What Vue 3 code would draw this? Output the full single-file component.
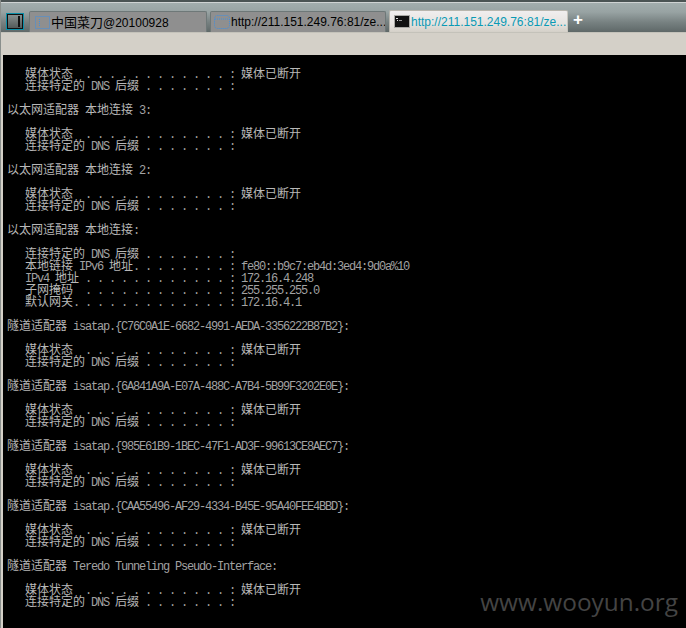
<script setup>
const dhcp = [
  '   媒体状态  . . . . . . . . . . . . : 媒体已断开',
  '   连接特定的 DNS 后缀 . . . . . . . :',
  ''
]
const raw = [
  '',
  ...dhcp,
  '以太网适配器 本地连接 3:',
  '',
  ...dhcp,
  '以太网适配器 本地连接 2:',
  '',
  ...dhcp,
  '以太网适配器 本地连接:',
  '',
  '   连接特定的 DNS 后缀 . . . . . . . :',
  '   本地链接 IPv6 地址. . . . . . . . : fe80::b9c7:eb4d:3ed4:9d0a%10',
  '   IPv4 地址 . . . . . . . . . . . . : 172.16.4.248',
  '   子网掩码  . . . . . . . . . . . . : 255.255.255.0',
  '   默认网关. . . . . . . . . . . . . : 172.16.4.1',
  '',
  '隧道适配器 isatap.{C76C0A1E-6682-4991-AEDA-3356222B87B2}:',
  '',
  ...dhcp,
  '隧道适配器 isatap.{6A841A9A-E07A-488C-A7B4-5B99F3202E0E}:',
  '',
  ...dhcp,
  '隧道适配器 isatap.{985E61B9-1BEC-47F1-AD3F-99613CE8AEC7}:',
  '',
  ...dhcp,
  '隧道适配器 isatap.{CAA55496-AF29-4334-B45E-95A40FEE4BBD}:',
  '',
  ...dhcp,
  '隧道适配器 Teredo Tunneling Pseudo-Interface:',
  '',
  ...dhcp
]
const lines = raw.map((text) =>
  (text.match(/[\u4e00-\u9fff]+|[^\u4e00-\u9fff]+/g) || []).map((t) => ({
    t,
    cjk: /[\u4e00-\u9fff]/.test(t)
  }))
)
</script>

<template>
  <div class="app">
    <header class="tabbar">
      <div class="logo"><i></i></div>
      <div class="tab first">
        <svg class="ico" width="15" height="13" viewBox="0 0 15 13">
          <rect x=".5" y=".5" width="14" height="12" fill="none" stroke="#3f8fe0" stroke-dasharray="1 1" />
          <path d="M4.5 3v8" stroke="#3f8fe0" stroke-dasharray="1 1" />
        </svg>
        <span><b class="zh">中国菜刀</b>@20100928</span>
      </div>
      <div class="tab second">
        <svg class="ico" width="16" height="14" viewBox="0 0 16 14">
          <rect x=".5" y=".5" width="15" height="13" rx="3" fill="none" stroke="#3f8fe0" stroke-dasharray="1 1" />
          <path d="M1 4h14" stroke="#3f8fe0" stroke-dasharray="1 1" />
        </svg>
        <span>http://211.151.249.76:81/ze...</span>
      </div>
      <div class="tab active">
        <svg class="ico" width="16" height="13" viewBox="0 0 16 13">
          <rect x=".5" y=".5" width="15" height="12" fill="#111" stroke="#a9a9a5" />
          <path d="M2 3.5h2M3 5.5h1" stroke="#ddd" />
          <path d="M5 5.5h3" stroke="#999" />
        </svg>
        <span>http://211.151.249.76:81/ze...</span>
      </div>
      <div class="plus">+</div>
    </header>
    <div class="toolbar"></div>
    <main class="console">
      <div v-for="(line, i) in lines" :key="i" class="line">
        <span v-for="(run, j) in line" :key="j" :class="run.cjk ? 'cjk' : 'lat'">{{ run.t }}</span>
      </div>
    </main>
    <div class="mark">www.wooyun.org</div>
  </div>
</template>

<style scoped>
.app {
  position: relative;
  width: 686px;
  height: 628px;
  overflow: hidden;
  display: flex;
  flex-direction: column;
  background: #d4d0c8;
  border-left: 1px solid #8a8f8c;
  box-sizing: border-box;
}
.tabbar {
  height: 33px;
  margin-left: -1px;
  flex: none;
  display: flex;
  align-items: flex-end;
  box-sizing: border-box;
  padding-left: 6px;
  border-top: 2px solid #4b5454;
  border-bottom: 1px solid #c4c2ba;
  background: linear-gradient(#cfd3d3 0 1px, #a2adad 1px, #98a3a3 10px, #788282 20px, #5f6868 100%);
}
.logo {
  width: 18px;
  height: 17px;
  margin-bottom: 2px;
  box-sizing: border-box;
  border: 1px solid #0a8fa8;
  background: linear-gradient(#8b9392, #4f5756);
  box-shadow: inset 0 0 0 1px #111;
  position: relative;
  margin-right: 5px;
}
.logo i {
  position: absolute;
  left: 11px;
  top: 2px;
  width: 2px;
  height: 11px;
  background: #111;
}
.tab {
  width: 178px;
  height: 21px;
  box-sizing: border-box;
  display: flex;
  align-items: center;
  padding: 0 0 0 5px;
  gap: 3px;
  margin-right: 3px;
  color: #000;
  background: #8f8f8f;
  border: 1px solid #6e7878;
  border-bottom: 0;
  border-radius: 2px 2px 0 0;
  font: 12px/1 "Liberation Sans", "Noto Sans CJK SC", sans-serif;
  white-space: nowrap;
  overflow: hidden;
}
.tab.first {
  gap: 1px;
}
.zh {
  font: 13px/1 "Noto Sans CJK SC", sans-serif;
}
.tab.second {
  width: 176px;
  gap: 1px;
  padding-left: 3px;
}
.tab.active {
  width: 179px;
  height: 22px;
  margin-right: 0;
  color: #0a9ab5;
  background: linear-gradient(#f0eeee, #e6e3e0 60%, #d4d0c8);
  border: 1px solid #b8b6ae;
  border-bottom: 0;
  border-right-color: #c9c7bf;
  padding-left: 4px;
  gap: 1px;
}
.ico {
  flex: none;
}
.plus {
  margin: 0 0 2px 2px;
  width: 16px;
  height: 20px;
  color: #fff;
  font: bold 17px/20px "Liberation Sans", sans-serif;
  text-align: center;
}
.toolbar {
  height: 22px;
  flex: none;
}
.console {
  flex: 1;
  margin-left: 2px;
  background: #000;
  padding-left: 4px;
}
.line {
  height: 12px;
  line-height: 12px;
  white-space: pre;
}
.lat {
  font: 12px/12px "Liberation Mono", monospace;
  letter-spacing: -1.2px;
  color: #a2a2a2;
}
.cjk {
  font: 12px/12px "Noto Sans CJK SC", sans-serif;
  color: #b8b8b8;
}
.mark {
  position: absolute;
  right: 8px;
  bottom: 13px;
  color: #444;
  font: 24.4px/26px "Open Sans", sans-serif;
}
</style>
